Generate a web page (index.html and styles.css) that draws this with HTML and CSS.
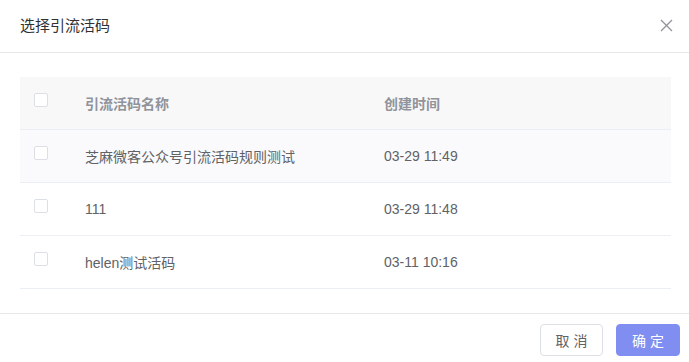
FILE: index.html
```html
<!DOCTYPE html>
<html lang="zh-CN">
<head>
<meta charset="utf-8">
<title>选择引流活码</title>
<link rel="stylesheet" href="styles.css">
</head>
<body>
<div class="dialog">
  <div class="dialog-header">
    <span class="dialog-title">选择引流活码</span>
    <span class="dialog-close" aria-label="关闭">
      <svg width="13" height="13" viewBox="0 0 13 13"><path d="M1 1L12 12M12 1L1 12" stroke="#909399" stroke-width="1.3" fill="none"/></svg>
    </span>
  </div>
  <div class="dialog-body">
    <table class="data-table">
      <colgroup><col class="col-sel"><col class="col-name"><col></colgroup>
      <thead>
        <tr>
          <th class="cell-sel"><span class="checkbox"></span></th>
          <th>引流活码名称</th>
          <th>创建时间</th>
        </tr>
      </thead>
      <tbody>
        <tr class="hover">
          <td class="cell-sel"><span class="checkbox"></span></td>
          <td>芝麻微客公众号引流活码规则测试</td>
          <td>03-29 11:49</td>
        </tr>
        <tr>
          <td class="cell-sel"><span class="checkbox"></span></td>
          <td>111</td>
          <td>03-29 11:48</td>
        </tr>
        <tr>
          <td class="cell-sel"><span class="checkbox"></span></td>
          <td>helen测试活码</td>
          <td>03-11 10:16</td>
        </tr>
      </tbody>
    </table>
  </div>
  <div class="dialog-footer">
    <button class="btn btn-default">取 消</button>
    <button class="btn btn-primary">确 定</button>
  </div>
</div>
</body>
</html>
```
FILE: styles.css
```css
* { box-sizing: border-box; }
html, body { margin: 0; padding: 0; background: #fff; }
body {
  font-family: "Liberation Sans", "Noto Sans CJK SC", sans-serif;
  font-size: 14px;
  color: #606266;
}
.dialog { width: 689px; }
.dialog-header {
  height: 53px;
  padding: 0 16px 0 20px;
  display: flex;
  align-items: center;
  justify-content: space-between;
  border-bottom: 1px solid #e8e8e8;
}
.dialog-title { font-size: 15px; color: #303133; line-height: 20px; }
.dialog-close { display: flex; width: 13px; height: 13px; margin-top: -1px; }
.dialog-body { padding: 24px 18px 24px 20px; }
.data-table {
  width: 100%;
  border-collapse: separate;
  border-spacing: 0;
  table-layout: fixed;
}
.col-sel { width: 55px; }
.col-name { width: 299px; }
.data-table th, .data-table td {
  height: 53px;
  padding: 0 10px;
  text-align: left;
  border-bottom: 1px solid #ebeef5;
  vertical-align: middle;
  white-space: nowrap;
}
.data-table th {
  background: #f8f8f9;
  color: #909399;
  font-weight: 700;
  font-size: 14px;
}
.data-table tr.hover td { background: #fafafc; }
.data-table .cell-sel { padding: 0 0 6px 14px; line-height: 0; }
.checkbox {
  display: inline-block;
  width: 14px;
  height: 14px;
  border: 1px solid #dcdfe6;
  border-radius: 2px;
  background: #fff;
}
.dialog-footer {
  border-top: 1px solid #e8e8e8;
  padding: 10px 9px 0 0;
  display: flex;
  justify-content: flex-end;
  gap: 13px;
}
.btn {
  height: 32px;
  width: 64px;
  border-radius: 4px;
  font-family: "Liberation Sans", "Noto Sans CJK SC", sans-serif;
  font-size: 14px;
  padding: 0;
  cursor: pointer;
}
.btn-default { background: #fff; border: 1px solid #dcdfe6; color: #606266; width: 63px; }
.btn-primary { background: #7f8ef0; border: 1px solid #7f8ef0; color: #fff; }
```
